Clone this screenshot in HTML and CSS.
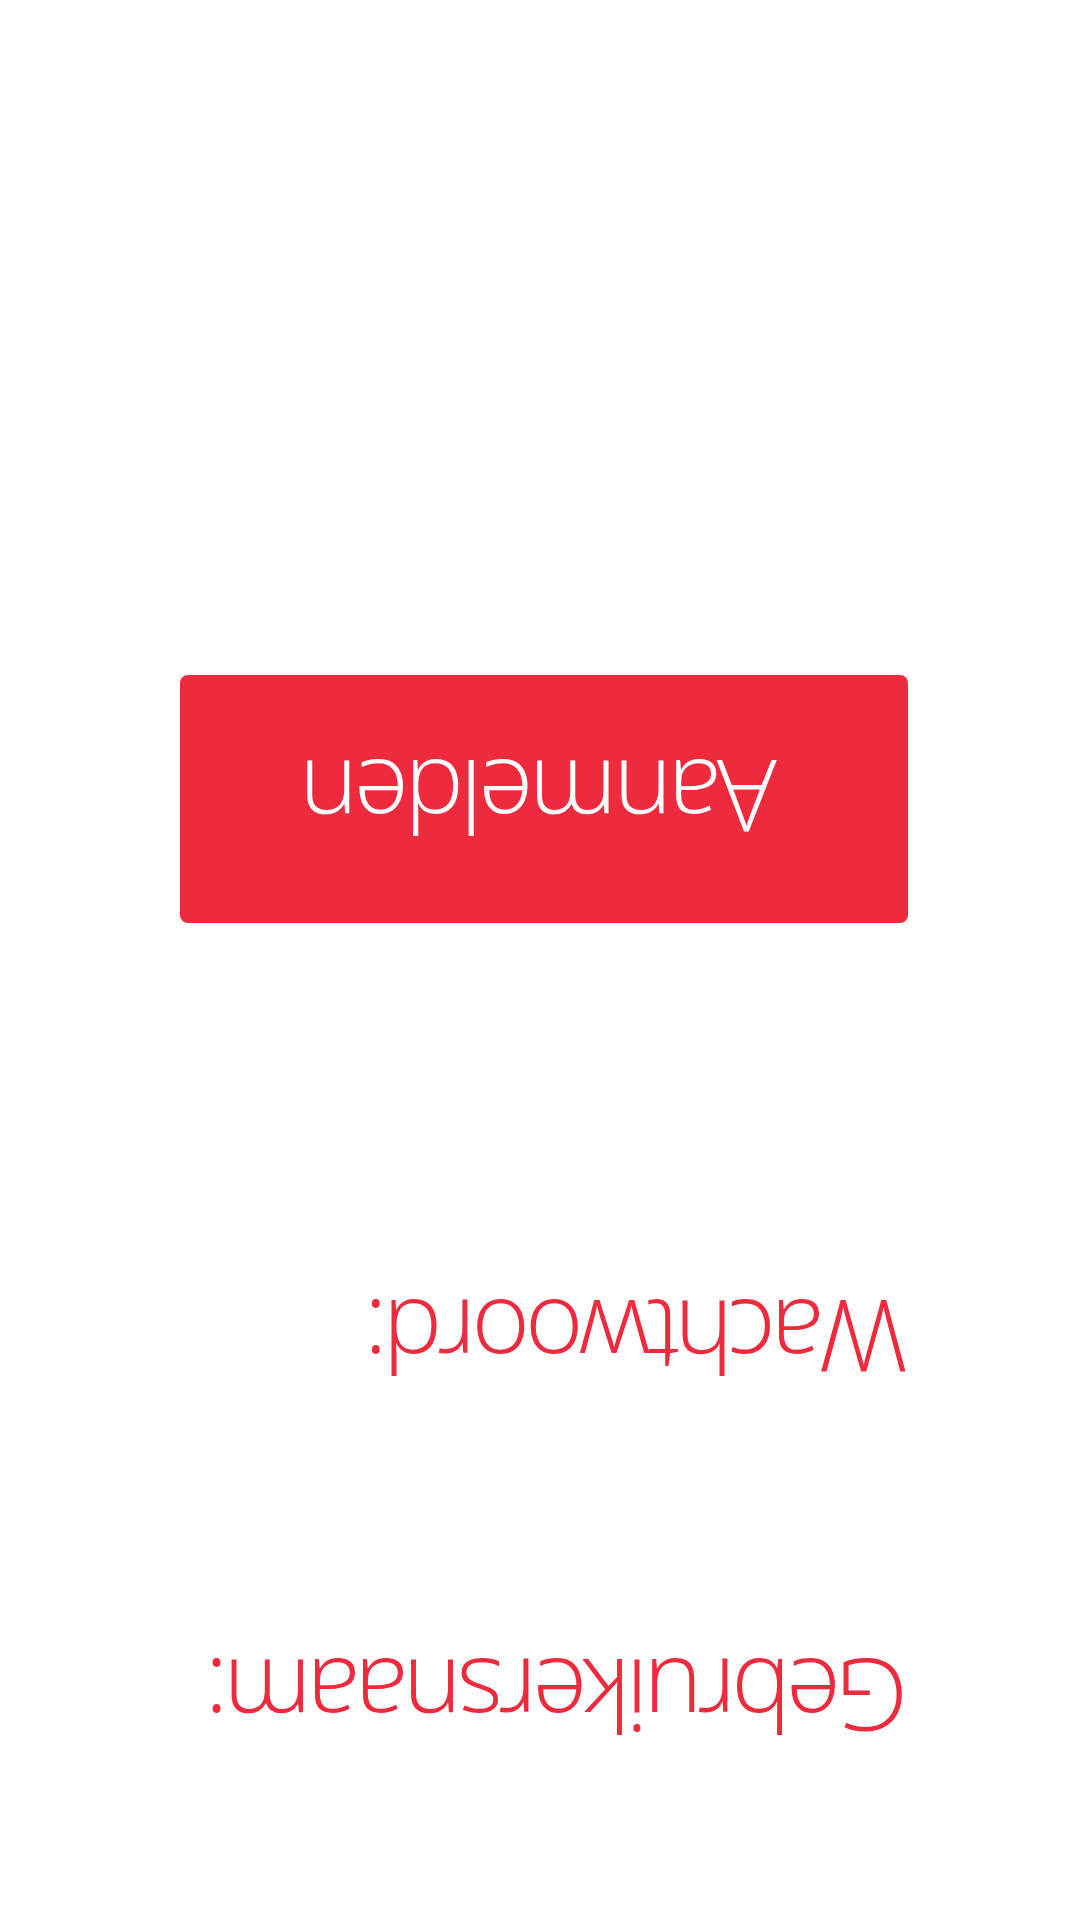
FILE: index.html
```html
<!DOCTYPE html>
<html lang="nl">
<head>
<meta charset="utf-8">
<title>Aanmelden</title>
<link rel="stylesheet" href="styles.css">
</head>
<body>
<div class="screen">
  <div class="form">
    <div class="label label-user">Gebruikersnaam:</div>
    <div class="label label-pass">Wachtwoord:</div>
    <button class="btn"><span class="btn-text">Aanmelden</span></button>
  </div>
</div>
</body>
</html>
```
FILE: styles.css
```css
html, body {
  margin: 0;
  padding: 0;
  background: #fefefe;
}
.screen {
  width: 1080px;
  height: 1920px;
  background: #fefefe;
  transform: rotate(180deg);
  overflow: hidden;
}
.form {
  display: flex;
  flex-direction: column;
  align-items: flex-start;
  padding: 172px 0 0 172px;
}
.label {
  font-family: "Open Sans", "Liberation Sans", sans-serif;
  font-weight: 300;
  font-size: 100px;
  line-height: 100px;
  letter-spacing: -5px;
  color: #ee2a3c;
  white-space: nowrap;
}
.label-pass {
  margin-top: 259px;
}
.btn {
  margin-top: 366px;
  width: 728px;
  height: 248px;
  border: none;
  border-radius: 8px;
  background: #ee2a3c;
  color: #ffffff;
  font-family: "Open Sans", "Liberation Sans", sans-serif;
  font-weight: 300;
  font-size: 100px;
  line-height: 100px;
  letter-spacing: -4.2px;
  display: flex;
  align-items: center;
  justify-content: center;
  padding: 0;
}
.btn-text {
  margin-left: 8px;
}
```
